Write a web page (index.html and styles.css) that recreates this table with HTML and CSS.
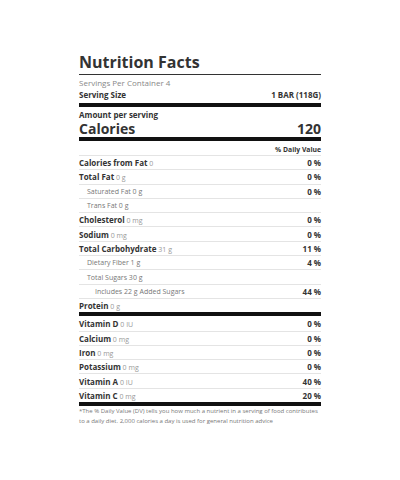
FILE: index.html
```html
<!DOCTYPE html>
<html lang="en">

<head>
    <meta charset="UTF-8">
    <meta name="viewport" content="width=device-width, initial-scale=1.0">
    <title>Nutrition Facts</title>
    <link rel="stylesheet" href="styles.css">
</head>

<body>
    <div class="label">
        <h1 class="label-title">Nutrition Facts</h1>
        <div class="servings">Servings Per Container 4</div>
        <div class="serving-size">
            <span>Serving Size</span>
            <span>1 BAR (118G)</span>
        </div>
        <div class="amount">
            <div class="amount-note">Amount per serving</div>
            <div class="calories">
                <span>Calories</span>
                <span>120</span>
            </div>
        </div>
        <div class="dv-head">% Daily Value</div>
        <!-- 营养成分 -->
        <div class="row"><span><b>Calories from Fat</b> 0</span><b>0 %</b></div>
        <div class="row"><span><b>Total Fat</b> 0 g</span><b>0 %</b></div>
        <div class="row sub"><span>Saturated Fat 0 g</span><b>0 %</b></div>
        <div class="row sub"><span>Trans Fat 0 g</span></div>
        <div class="row"><span><b>Cholesterol</b> 0 mg</span><b>0 %</b></div>
        <div class="row"><span><b>Sodium</b> 0 mg</span><b>0 %</b></div>
        <div class="row"><span><b>Total Carbohydrate</b> 31 g</span><b>11 %</b></div>
        <div class="row sub"><span>Dietary Fiber 1 g</span><b>4 %</b></div>
        <div class="row sub"><span>Total Sugars 30 g</span></div>
        <div class="row sub2"><span>Includes 22 g Added Sugars</span><b>44 %</b></div>
        <div class="row"><span><b>Protein</b> 0 g</span></div>
        <!-- 维生素和矿物质 -->
        <div class="vitamins">
            <div class="row"><span><b>Vitamin D</b> 0 IU</span><b>0 %</b></div>
            <div class="row"><span><b>Calcium</b> 0 mg</span><b>0 %</b></div>
            <div class="row"><span><b>Iron</b> 0 mg</span><b>0 %</b></div>
            <div class="row"><span><b>Potassium</b> 0 mg</span><b>0 %</b></div>
            <div class="row"><span><b>Vitamin A</b> 0 IU</span><b>40 %</b></div>
            <div class="row"><span><b>Vitamin C</b> 0 mg</span><b>20 %</b></div>
        </div>
        <p class="footnote">*The % Daily Value (DV) tells you how much a nutrient in a serving of food contributes to a daily diet. 2,000 calories a day is used for general nutrition advice</p>
    </div>
</body>

</html>
```

FILE: styles.css
```css
* {
    margin: 0;
    padding: 0;
    box-sizing: border-box;
}

body {
    background-color: #fff;
    font-family: "Open Sans", "Liberation Sans", sans-serif;
    color: #333;
}

.label {
    width: 242px;
    margin: 51px auto 0 auto;
}

.label-title {
    font-size: 16px;
    line-height: 22px;
    font-weight: 700;
    color: #333;
    padding-bottom: 1px;
    border-bottom: 1px solid #333;
}

.servings {
    font-size: 8px;
    line-height: 12px;
    margin-top: 2px;
    color: #888;
}

.serving-size {
    display: flex;
    justify-content: space-between;
    font-size: 8px;
    line-height: 12px;
    font-weight: 700;
    padding-bottom: 2px;
    border-bottom: 4px solid #111;
}

.amount {
    padding-top: 2px;
    border-bottom: 4px solid #111;
}

.amount-note {
    font-size: 8px;
    line-height: 12px;
    font-weight: 700;
}

.calories {
    display: flex;
    justify-content: space-between;
    font-size: 14px;
    line-height: 16px;
    font-weight: 700;
}

.dv-head {
    font-size: 6.8px;
    line-height: 11px;
    font-weight: 700;
    text-align: right;
    padding-top: 3px;
}

.row {
    display: flex;
    justify-content: space-between;
    align-items: center;
    height: 14.3px;
    font-size: 7px;
    border-top: 1px solid #e4e4e4;
    color: #999;
}

.row b {
    color: #333;
    font-size: 8px;
    font-weight: 700;
}

.row.sub span,
.row.sub2 span {
    color: #777;
}

.row.sub span {
    padding-left: 8px;
}

.row.sub2 span {
    padding-left: 16px;
}

.vitamins {
    border-top: 4px solid #111;
    border-bottom: 4px solid #111;
}

.vitamins .row:first-child {
    border-top: 0;
}

.footnote {
    font-size: 6px;
    line-height: 10px;
    color: #777;
}
```
